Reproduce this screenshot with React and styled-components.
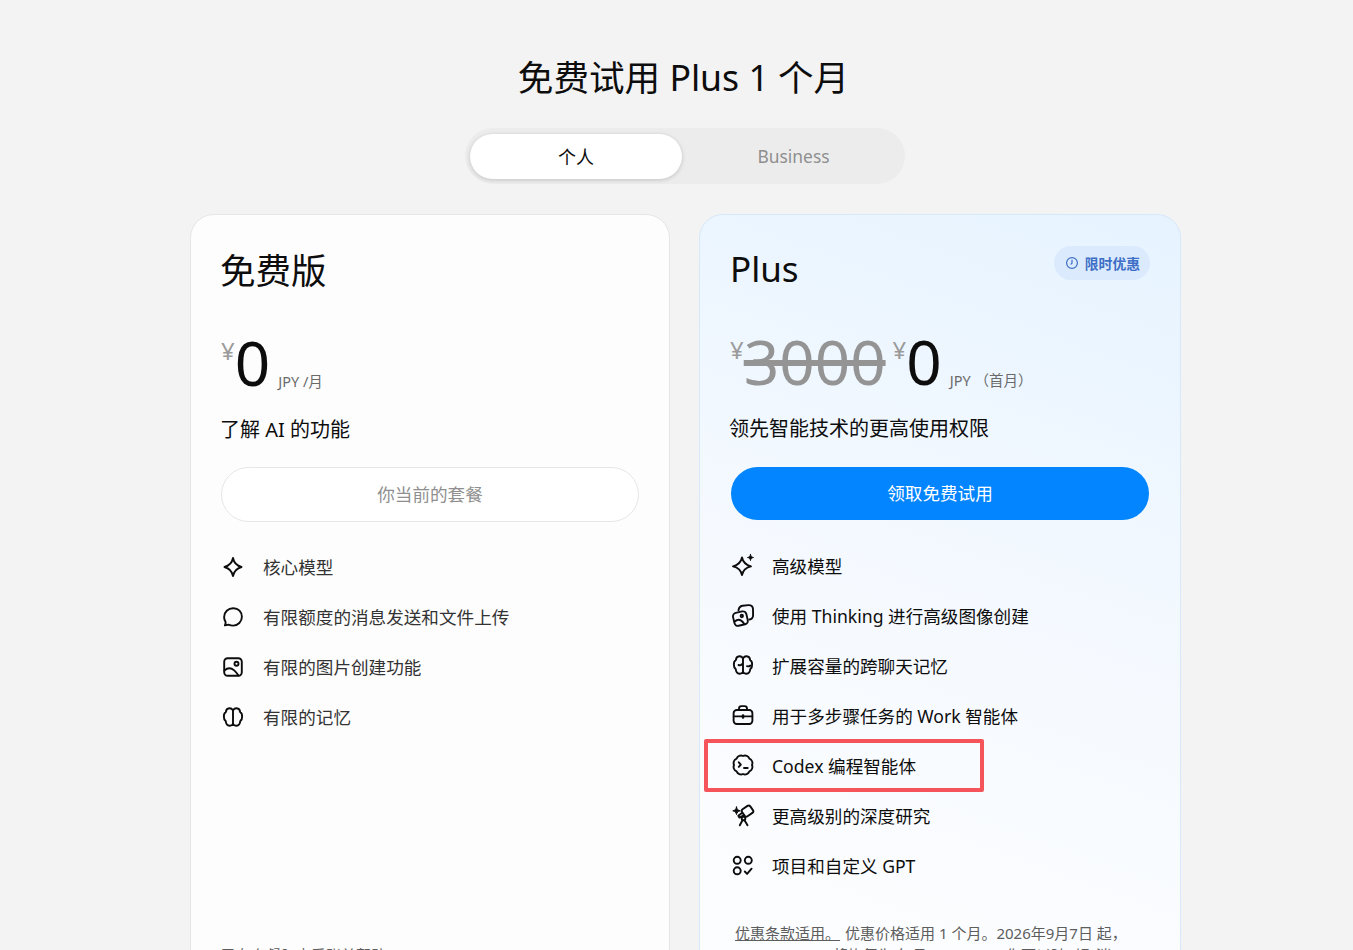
import styled, { createGlobalStyle } from 'styled-components';

const GlobalStyle = createGlobalStyle`
  html, body {
    margin: 0;
    padding: 0;
    height: 950px;
    overflow: hidden;
    background: #f3f3f3;
    font-family: "Noto Sans", "Noto Sans CJK SC", sans-serif;
    color: #0d0d0d;
  }
`;

const Page = styled.div`
  width: 991px;
  margin-left: 190px;
  padding-top: 50px;
`;

const Title = styled.h1`
  margin: 0 4px 0 0;
  font-size: 35.6px;
  font-weight: 400;
  line-height: 54px;
  text-align: center;
`;

const Toggle = styled.div`
  display: flex;
  box-sizing: border-box;
  width: 440px;
  height: 56px;
  margin: 24px auto 30px 275px;
  padding: 6px 0 5px 5px;
  border-radius: 28px;
  background: #ececec;
`;

const Tab = styled.div`
  flex: ${props => (props.$active ? '0 0 212px' : '1')};
  display: flex;
  align-items: center;
  justify-content: center;
  padding-bottom: 2px;
  box-sizing: border-box;
  border-radius: 23px;
  font-size: ${props => (props.$active ? '18px' : '17.4px')};
  color: ${props => (props.$active ? '#0d0d0d' : '#8f8f8f')};
  background: ${props => (props.$active ? '#fff' : 'transparent')};
  box-shadow: ${props => (props.$active ? '0 1px 4px rgba(0,0,0,.18)' : 'none')};
`;

const Cards = styled.div`
  display: grid;
  grid-template-columns: 480px 482px;
  gap: 29px;
`;

const Card = styled.section`
  box-sizing: border-box;
  height: 800px;
  display: flex;
  flex-direction: column;
  padding: ${props => (props.$plus ? '23px 31px 0' : '24px 30px 0 29px')};
  border-radius: 24px;
  border: 1px solid ${props => (props.$plus ? '#d6e8fb' : '#e6e6e6')};
  background: ${props =>
    props.$plus ? 'linear-gradient(200deg, #e6f3ff 0%, #f4f9ff 45%, #fcfdff 85%)' : '#fdfdfd'};
`;

const CardHead = styled.div`
  display: flex;
  align-items: flex-start;
  justify-content: space-between;
  height: 62px;
`;

const PlanName = styled.h2`
  margin: ${props => (props.$plus ? '0 0 0 -1px' : '0')};
  font-size: ${props => (props.$plus ? '35px' : '35.5px')};
  font-weight: 400;
  line-height: 62px;
`;

const Badge = styled.div`
  display: flex;
  align-items: center;
  gap: 6px;
  height: 34px;
  margin: 8px -1px 0 0;
  padding: 0 10px 0 11px;
  border-radius: 17px;
  background: #dbeafd;
  color: #3d6fc6;
  font-size: 13.8px;
  font-weight: 700;
`;

const PriceRow = styled.div`
  display: flex;
  align-items: flex-start;
  height: 82px;
  margin: 22px 0 0 ${props => (props.$plus ? '-1px' : '1px')};
`;

const Currency = styled.span`
  font-size: 24px;
  line-height: 36px;
  margin-top: 10px;
  color: #9b9b9b;
`;

const Amount = styled.span`
  font-size: 62px;
  line-height: 74px;
  margin-top: 2px;
  color: ${props => (props.$old ? '#949494' : '#0d0d0d')};
  text-decoration: ${props => (props.$old ? 'line-through' : 'none')};
  margin-right: ${props => (props.$old ? '7px' : '0')};
`;

const Period = styled.span`
  margin: 48px 0 0 8px;
  font-size: 14.5px;
  line-height: 20px;
  color: #6a6a6a;
`;

const Subtitle = styled.p`
  margin: 10px 0 ${props => (props.$plus ? '23px' : '22px')};
  font-size: 20px;
  line-height: 30px;
  margin-left: ${props => (props.$plus ? '-2px' : '0')};
`;

const ActionButton = styled.div`
  box-sizing: border-box;
  display: flex;
  align-items: center;
  justify-content: center;
  height: ${props => (props.$primary ? '53px' : '55px')};
  margin-left: ${props => (props.$primary ? '0' : '1px')};
  padding-bottom: 2px;
  border-radius: 28px;
  border: ${props => (props.$primary ? 'none' : '1px solid #e6e6e6')};
  background: ${props => (props.$primary ? '#0285ff' : '#fff')};
  color: ${props => (props.$primary ? '#fff' : '#8f8f8f')};
  font-size: 17.6px;
`;

const Features = styled.ul`
  list-style: none;
  margin: ${props => (props.$plus ? '20px' : '19px')} 0 0;
  padding: 0;
`;

const Feature = styled.li`
  position: relative;
  display: flex;
  align-items: center;
  gap: ${props => (props.$plus ? '17px' : '18px')};
  height: 50px;
  font-size: 17.6px;
  color: ${props => (props.$plus ? '#0d0d0d' : '#333')};
  margin-left: ${props => (props.$plus ? '0' : '1px')};

  svg {
    flex: none;
    width: 24px;
    height: 24px;
    margin-top: ${props => (props.$plus ? '0' : '2px')};
  }
`;

const Highlight = styled.div`
  position: absolute;
  left: -27px;
  top: -1px;
  width: 272px;
  height: 45px;
  border: 4px solid #f5555a;
  border-radius: 2px;
  pointer-events: none;
`;

const Legal = styled.p`
  margin: 32px 0 0 4px;
  font-size: 15px;
  line-height: 22px;
  color: #5d5d5d;

  u {
    margin-right: 5px;
  }
`;

const HelpText = styled.p`
  margin: 202px 0 0 1px;
  font-size: 15px;
  line-height: 24px;
  color: #5d5d5d;
`;

const Icon = ({ children }) => (
  <svg viewBox="0 0 24 24" fill="none" stroke="#0d0d0d" strokeWidth="1.9" strokeLinecap="round" strokeLinejoin="round">
    {children}
  </svg>
);

const SparkIcon = () => (
  <Icon>
    <path d="M12 3c.9 4.600 3.400 7.600 8.500 9-5.100 1.400-7.600 4.400-8.500 9-.9-4.600-3.400-7.600-8.500-9C8.600 10.600 11.100 7.600 12 3z" />
  </Icon>
);

const ChatIcon = () => (
  <Icon>
    <path d="M12.500 3.200c4.800 0 8.400 3.800 8.400 8.600 0 4.800-3.900 8.800-8.800 8.800-1.800 0-3.300-.4-4.600-.9-1.200.4-2.300.7-3.600.7.500-1.100.8-2.200.7-3.400-1-1.500-1.500-3.200-1.500-5.100 0-4.900 4.100-8.700 9-8.700z" />
  </Icon>
);

const ImageIcon = () => (
  <Icon>
    <rect x="3.200" y="3.200" width="17.600" height="17.600" rx="3.500" />
    <circle cx="15.500" cy="8.800" r="2" />
    <path d="M3.400 15.500c3.300-2.900 6.600-2.900 9.800-.1 1.700 1.500 3.200 3.500 4.300 5.200" />
  </Icon>
);

const BrainIcon = () => (
  <Icon>
    <path d="M12 5.200C11 3.800 9.700 3.200 8.400 3.300 6.200 3.500 5 5.200 4.900 7 3.400 8 2.700 9.800 2.900 11.800c-.1 1.700.6 3.300 1.900 4.400.1 2.600 1.600 4.300 3.800 4.500 1.400.1 2.600-.5 3.400-1.700.8 1.200 2 1.800 3.400 1.700 2.200-.2 3.700-1.900 3.800-4.500 1.300-1.100 2-2.700 1.900-4.400.2-2-.5-3.800-2-4.800-.1-1.800-1.300-3.500-3.500-3.700-1.300-.1-2.600.5-3.600 1.900z" />
    <path d="M12 5.200v13.800" />
  </Icon>
);

const SparklesIcon = () => (
  <Icon>
    <path d="M11 4.500c1 4.900 3.500 7.400 9 8.800-5.500 1.300-8 3.700-9 8.700-1-5-3.500-7.400-9-8.700 5.500-1.400 8-3.900 9-8.800z" />
    <path fill="#0d0d0d" strokeWidth="1" d="M19.500 1.500c.3 1.800 1.200 2.700 3 3-1.800.3-2.700 1.200-3 3-.3-1.800-1.200-2.700-3-3 1.800-.3 2.700-1.200 3-3z" />
  </Icon>
);

const ImagesIcon = () => (
  <Icon>
    <path d="M7.500 7.300c.3-2.700 1.800-4.300 4-4.600l6-.6c2.600-.2 4.400 1.300 4.500 3.900l.1 6c0 2.500-1.400 4.200-3.800 4.500" />
    <rect x="2.600" y="9" width="13.600" height="13.200" rx="3.500" transform="rotate(-13 9.400 15.600)" />
    <circle cx="10.800" cy="13" r="1.200" />
    <path d="M3.700 18.500c2.200-2 4.500-2.300 6.500-.9 1.200.8 2.200 2 2.900 3.200" />
  </Icon>
);

const BrainDetailIcon = () => (
  <Icon>
    <path d="M12 5.200C11 3.800 9.700 3.200 8.400 3.300 6.200 3.500 5 5.200 4.900 7 3.400 8 2.700 9.800 2.900 11.800c-.1 1.700.6 3.300 1.900 4.400.1 2.600 1.600 4.300 3.800 4.500 1.400.1 2.600-.5 3.400-1.700.8 1.200 2 1.800 3.400 1.700 2.200-.2 3.700-1.900 3.800-4.500 1.300-1.100 2-2.700 1.900-4.400.2-2-.5-3.800-2-4.800-.1-1.800-1.300-3.500-3.500-3.700-1.300-.1-2.600.5-3.600 1.900z" />
    <path d="M12 5.200v13.800M7.500 12c1.300.5 2.500.3 3.200-.8M19.300 12.600c-1 .7-2.100.9-3.300.6" />
  </Icon>
);

const BriefcaseIcon = () => (
  <Icon>
    <rect x="2.600" y="7" width="18.800" height="14" rx="3.200" />
    <path d="M8 7V5.600c0-1.500 1-2.500 2.400-2.500h3.200c1.400 0 2.400 1 2.400 2.500V7" />
    <path d="M2.800 13.400h18.400" />
    <path d="M12 12.500v2" strokeWidth="2.500" />
  </Icon>
);

const CodexIcon = () => (
  <Icon>
    <path d="M12 3A4.800 4.800 0 0 1 18.400 5.600 4.800 4.800 0 0 1 21 12 4.800 4.800 0 0 1 18.400 18.400 4.800 4.800 0 0 1 12 21 4.800 4.800 0 0 1 5.600 18.400 4.800 4.800 0 0 1 3 12 4.800 4.800 0 0 1 5.600 5.600 4.800 4.800 0 0 1 12 3z" />
    <path d="M7.800 9.300l2 2.300-2 2.300M13 15h3.700" />
  </Icon>
);

const TelescopeIcon = () => (
  <Icon>
    <rect x="11.500" y="3.800" width="10" height="8.600" rx="2" transform="rotate(-35 16.500 8.100)" />
    <path d="M12.200 12.700l-3.800 1.900-1.100-1.900 3.300-2.500" />
    <circle cx="12.500" cy="15.500" r="1.800" />
    <path d="M11.500 17.200L8.800 22.300M13.500 17.200l3 5.100" />
    <path fill="#0d0d0d" strokeWidth="1" d="M5.500 4c.4 2.300 1.500 3.400 3.700 3.800-2.200.4-3.300 1.500-3.700 3.700-.4-2.200-1.500-3.300-3.700-3.700C4 7.400 5.100 6.300 5.500 4z" />
  </Icon>
);

const ProjectsIcon = () => (
  <Icon>
    <circle cx="6.200" cy="7.300" r="3.500" />
    <circle cx="17.300" cy="7.300" r="3.500" />
    <circle cx="6.200" cy="17.800" r="3.500" />
    <path d="M13.800 18.500l2.300 2.400 4.500-5.200" />
  </Icon>
);

const ClockIcon = () => (
  <svg width="14" height="14" viewBox="0 0 14 14" fill="none" stroke="#3d6fc6" strokeWidth="1.200" strokeLinecap="round">
    <circle cx="7" cy="7" r="5.400" />
    <path d="M7 4v3.200L6 8.200" />
  </svg>
);

const freeFeatures = [
  [SparkIcon, '核心模型'],
  [ChatIcon, '有限额度的消息发送和文件上传'],
  [ImageIcon, '有限的图片创建功能'],
  [BrainIcon, '有限的记忆'],
];

const plusFeatures = [
  [SparklesIcon, '高级模型'],
  [ImagesIcon, '使用 Thinking 进行高级图像创建'],
  [BrainDetailIcon, '扩展容量的跨聊天记忆'],
  [BriefcaseIcon, '用于多步骤任务的 Work 智能体'],
  [CodexIcon, 'Codex 编程智能体', true],
  [TelescopeIcon, '更高级别的深度研究'],
  [ProjectsIcon, '项目和自定义 GPT'],
];

const App = () => {
  return (
    <>
      <GlobalStyle />
      <Page>
        <Title>免费试用 Plus 1 个月</Title>
        <Toggle>
          <Tab $active>个人</Tab>
          <Tab>Business</Tab>
        </Toggle>
        <Cards>
          <Card>
            <CardHead>
              <PlanName>免费版</PlanName>
            </CardHead>
            <PriceRow>
              <Currency>¥</Currency>
              <Amount>0</Amount>
              <Period>JPY /月</Period>
            </PriceRow>
            <Subtitle>了解 AI 的功能</Subtitle>
            <ActionButton>你当前的套餐</ActionButton>
            <Features>
              {freeFeatures.map(([FeatureIcon, label]) => (
                <Feature key={label}>
                  <FeatureIcon />
                  {label}
                </Feature>
              ))}
            </Features>
            <HelpText>已有套餐？查看账单帮助</HelpText>
          </Card>
          <Card $plus>
            <CardHead>
              <PlanName $plus>Plus</PlanName>
              <Badge>
                <ClockIcon />
                限时优惠
              </Badge>
            </CardHead>
            <PriceRow $plus>
              <Currency>¥</Currency>
              <Amount $old>3000</Amount>
              <Currency>¥</Currency>
              <Amount>0</Amount>
              <Period>JPY （首月）</Period>
            </PriceRow>
            <Subtitle $plus>领先智能技术的更高使用权限</Subtitle>
            <ActionButton $primary>领取免费试用</ActionButton>
            <Features $plus>
              {plusFeatures.map(([FeatureIcon, label, marked]) => (
                <Feature $plus key={label}>
                  {marked && <Highlight />}
                  <FeatureIcon />
                  {label}
                </Feature>
              ))}
            </Features>
            <Legal>
              <u>优惠条款适用。</u>优惠价格适用 1 个月。2026年9月7日 起，ChatGPT Plus 将恢复为 每月 JPY3,000，你可以随时取消。
            </Legal>
          </Card>
        </Cards>
      </Page>
    </>
  );
};

export default App;
